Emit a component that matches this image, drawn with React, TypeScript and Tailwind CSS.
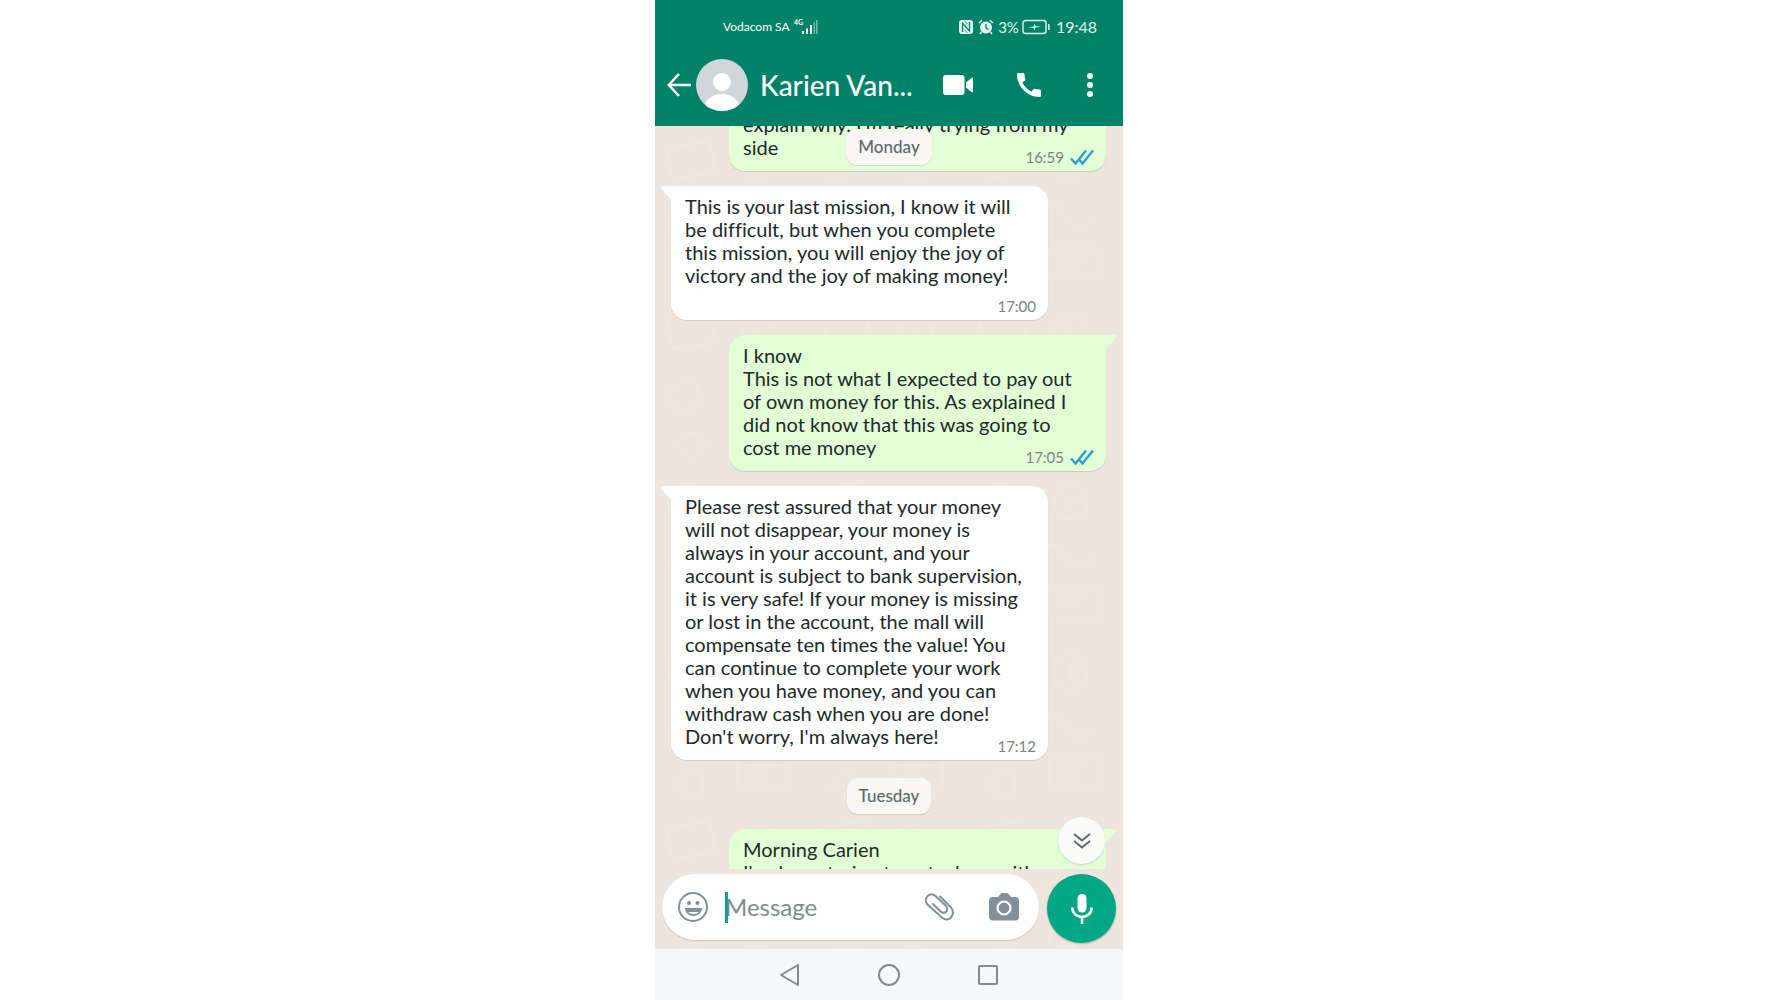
import type { ReactNode } from 'react'
import { MdCall } from 'react-icons/md'

type Message = {
  id: number
  mine?: boolean
  lines: string[]
  time?: string
  timeBelow?: boolean
  tail?: boolean
}

const monday: Message[] = [
  { id: 1, mine: true, lines: ["explain why. I'm really trying from my", 'side'], time: '16:59' },
  {
    id: 2,
    tail: true,
    timeBelow: true,
    time: '17:00',
    lines: [
      'This is your last mission, I know it will',
      'be difficult, but when you complete',
      'this mission, you will enjoy the joy of',
      'victory and the joy of making money!',
    ],
  },
  {
    id: 3,
    mine: true,
    tail: true,
    time: '17:05',
    lines: [
      'I know',
      'This is not what I expected to pay out',
      'of own money for this. As explained I',
      'did not know that this was going to',
      'cost me money',
    ],
  },
  {
    id: 4,
    tail: true,
    time: '17:12',
    lines: [
      'Please rest assured that your money',
      'will not disappear, your money is',
      'always in your account, and your',
      'account is subject to bank supervision,',
      'it is very safe! If your money is missing',
      'or lost in the account, the mall will',
      'compensate ten times the value! You',
      'can continue to complete your work',
      'when you have money, and you can',
      'withdraw cash when you are done!',
      "Don't worry, I'm always here!",
    ],
  },
]

const tuesday: Message[] = [
  { id: 5, mine: true, tail: true, lines: ['Morning Carien', "I've been trying to get a loan with"] },
]

function DoubleTick() {
  return (
    <svg viewBox="0 0 24 16" className="h-4 w-6" fill="none" stroke="#2a9fd0" strokeWidth="2.4" aria-hidden="true">
      <path d="M1 9.500l4.600 5L16 1.500" />
      <path d="M9.500 11l3 3.500L23 1.500" />
    </svg>
  )
}

function Bubble({ message }: { message: Message }) {
  const { mine, tail, lines, time, timeBelow } = message
  return (
    <div className={mine ? 'flex justify-end pr-[17px] pl-[74px]' : 'flex pl-4 pr-[75px]'}>
      <div
        className={`relative w-full rounded-[16px] px-[14px] pt-[9px] pb-3 shadow-[0_1px_1px_rgba(0,0,0,0.12)] ${
          mine ? 'bg-[#e2ffd6]' : 'bg-[#fefefe]'
        } ${tail ? (mine ? 'rounded-tr-none' : 'rounded-tl-none') : ''}`}
      >
        {tail && (
          <svg
            viewBox="0 0 12 16"
            className={`absolute top-0 h-4 w-3 ${mine ? '-right-[11px] -scale-x-100 text-[#e2ffd6]' : '-left-[11px] text-[#fefefe]'}`}
            aria-hidden="true"
          >
            <path d="M12 0H2.500C0.600 0 0 1.400 1.400 2.800L12 15z" fill="currentColor" />
          </svg>
        )}
        <p className="text-xl leading-[23px] whitespace-nowrap text-[#1d2a2a] [font-variant-ligatures:none]">
          {lines.map((line) => (
            <span key={line} className="block">
              {line}
            </span>
          ))}
        </p>
        {timeBelow && <div className="h-[21px]" />}
        {time && (
          <div className="absolute right-3 bottom-[5px] flex items-center gap-[6px] text-[15px] leading-[18px] text-[#7b8483]">
            <time>{time}</time>
            {mine && <DoubleTick />}
          </div>
        )}
      </div>
    </div>
  )
}

function DayChip({ children }: { children: ReactNode }) {
  return (
    <span className="rounded-[11px] bg-[#f8f7f4] px-3 py-2 text-[17px] leading-5 font-medium text-[#5f696c] shadow-[0_1px_1px_rgba(0,0,0,0.12)]">
      {children}
    </span>
  )
}

function StatusBar() {
  return (
    <div className="flex h-[54px] items-center justify-between pr-[26px] pl-[68px] text-white">
      <div className="flex items-center gap-1">
        <span className="text-xs">Vodacom SA</span>
        <svg viewBox="0 0 24 16" className="h-4 w-6" aria-hidden="true">
          <text x="0" y="6" fontSize="7" fontWeight="700" fill="currentColor">4G</text>
          <path d="M8 12h2v3H8zM12 9.500h2v5.500h-2zM16 6h2v9h-2z" fill="currentColor" />
          <path d="M19.500 3h1.500v12h-1.500zM22 1h1.500v14H22z" fill="currentColor" opacity="0.45" />
        </svg>
      </div>
      <div className="flex items-center text-[#e3f5ef]">
        <svg viewBox="0 0 14 14" className="size-[14px]" fill="none" aria-hidden="true">
          <rect width="14" height="14" rx="3" fill="currentColor" />
          <path d="M3.500 12V3.200L10.500 11V2" stroke="#008268" strokeWidth="1.300" />
          <path d="M5.500 1L9 4.500M5 9.500L8.500 13" stroke="#008268" strokeWidth="0.800" />
        </svg>
        <svg viewBox="0 0 16 16" className="ml-[5px] size-4" fill="none" stroke="currentColor" aria-hidden="true">
          <circle cx="8" cy="8.500" r="6" fill="currentColor" stroke="none" />
          <path d="M1 4l3-2.700M15 4l-3-2.700M3.500 13L2 15M12.500 13l1.500 2" strokeWidth="1.500" />
          <path d="M8 5v4l2.500 1.500" stroke="#008268" strokeWidth="1.300" />
        </svg>
        <span className="ml-1 text-[15px]">3%</span>
        <svg viewBox="0 0 28 16" className="ml-[3px] h-4 w-7" fill="none" stroke="currentColor" aria-hidden="true">
          <rect x="1" y="1.500" width="23" height="13" rx="2.500" strokeWidth="1.400" />
          <path d="M26.800 5v6" strokeWidth="1.500" />
          <path d="M6 8.200l6-.7V4.800l1.800 2.400 5.200.6-6 .9v2.700l-1.600-2.500z" fill="currentColor" stroke="none" />
        </svg>
        <span className="ml-[6px] text-base">19:48</span>
      </div>
    </div>
  )
}

function ChatHeader() {
  return (
    <div className="flex h-[72px] items-center pr-[29px] pb-[10px] pl-3 text-white">
      <button aria-label="Back" className="flex">
        <svg viewBox="0 0 24 24" className="size-6" fill="none" stroke="currentColor" strokeWidth="2.500" aria-hidden="true">
          <path d="M12 1L1.800 12 12 23M2 12h22" />
        </svg>
      </button>
      <svg viewBox="0 0 52 52" className="ml-[5px] size-[52px] shrink-0" aria-hidden="true">
        <clipPath id="avatar"><circle cx="26" cy="26" r="26" /></clipPath>
        <g clipPath="url(#avatar)">
          <rect width="52" height="52" fill="#cfd6dc" />
          <circle cx="26" cy="23" r="9" fill="#fff" />
          <ellipse cx="26" cy="48" rx="17" ry="13" fill="#fff" />
        </g>
      </svg>
      <h1 className="ml-3 min-w-0 flex-1 truncate text-[28px] leading-8 font-medium">Karien Van...</h1>
      <button aria-label="Video call" className="ml-4">
        <svg viewBox="0 0 30 20" className="h-5 w-[30px]" fill="currentColor" aria-hidden="true">
          <rect width="21.500" height="20" rx="3" />
          <path d="M23 7.500L28.500 3q1.500-1 1.500.5v13q0 1.500-1.500.5L23 12.500z" />
        </svg>
      </button>
      <button aria-label="Call" className="ml-10">
        <MdCall className="size-8" />
      </button>
      <button aria-label="More options" className="ml-[41px]">
        <svg viewBox="0 0 8 24" className="h-6 w-2" fill="currentColor" aria-hidden="true">
          <circle cx="4" cy="3" r="3" />
          <circle cx="4" cy="12" r="3" />
          <circle cx="4" cy="21" r="3" />
        </svg>
      </button>
    </div>
  )
}

function Wallpaper() {
  return (
    <svg className="absolute inset-0 size-full" aria-hidden="true">
      <defs>
        <pattern id="doodles" width="156" height="170" patternUnits="userSpaceOnUse">
          <g fill="none" stroke="#f5ede5" strokeWidth="2">
            <rect x="14" y="18" width="44" height="32" rx="5" transform="rotate(-8 36 34)" />
            <circle cx="104" cy="36" r="17" />
            <path d="M96 36h16M104 28v16M70 90q14-22 28 0t28 0M12 96l26-16 10 26-26 14z" />
            <rect x="82" y="122" width="50" height="30" rx="3" />
            <path d="M90 130h34M90 140h24M20 150q12-20 28-8 4 16-10 20z" />
          </g>
        </pattern>
      </defs>
      <rect width="100%" height="100%" fill="url(#doodles)" opacity="0.35" />
    </svg>
  )
}

function Composer() {
  return (
    <form className="relative flex items-start gap-2 px-[7px] pt-[5px] pb-[6px]">
      <div className="flex h-[66px] min-w-0 flex-1 items-center rounded-full bg-[#fefefe] pr-5 pl-4 shadow-[0_1px_1px_rgba(0,0,0,0.15)]">
        <button type="button" aria-label="Emoji">
          <svg viewBox="0 0 30 30" className="size-[30px]" fill="none" stroke="#82909a" strokeWidth="2" aria-hidden="true">
            <circle cx="15" cy="15" r="14" />
            <circle cx="11" cy="11" r="2" fill="#82909a" stroke="none" />
            <circle cx="19.500" cy="11" r="2" fill="#82909a" stroke="none" />
            <path d="M8 17h15c-1 8-14 8-15 0z" />
            <path d="M8 17h15l-1 3H9z" fill="#82909a" stroke="none" />
          </svg>
        </button>
        <span className="ml-[17px] h-[31px] w-[3px] bg-[#0aa581]" />
        <input
          aria-label="Message"
          placeholder="Message"
          className="-ml-[3px] min-w-0 flex-1 bg-transparent text-2xl text-[#1d2a2a] outline-none placeholder:text-[#808b90]"
        />
        <button type="button" aria-label="Attach">
          <svg viewBox="0 0 30 28" className="h-7 w-[30px]" fill="none" stroke="#82909a" strokeWidth="2" strokeLinecap="round" aria-hidden="true">
            <path d="M16 3.500L27 14.500C32 21 25.500 30 18.500 25L3.500 11.500C-1.500 5.500 6-2 11.500 3L22 13C25.500 17.500 20.500 22 16.500 18.500L9 11" />
          </svg>
        </button>
        <button type="button" aria-label="Camera" className="ml-[35px]">
          <svg viewBox="0 0 30 28" className="h-7 w-[30px]" aria-hidden="true">
            <path d="M4 4h5l2.500-3q.8-1 2-1h4q1.200 0 2 1L22 4h4q4 0 4 4v15.500q0 4-4 4H4q-4 0-4-4V8q0-4 4-4z" fill="#82909a" />
            <circle cx="15" cy="15" r="6.500" fill="none" stroke="#fff" strokeWidth="2.200" />
          </svg>
        </button>
      </div>
      <button
        type="button"
        aria-label="Record voice message"
        className="flex size-[69px] shrink-0 items-center justify-center rounded-full bg-[#02a884] shadow-[0_1px_2px_rgba(0,0,0,0.25)]"
      >
        <svg viewBox="0 0 22 30" className="h-[30px] w-[22px]" fill="none" stroke="#fff" strokeWidth="2.500" aria-hidden="true">
          <rect x="6.500" y="0" width="9" height="18.500" rx="4.500" fill="#fff" stroke="none" />
          <path d="M1.300 13.500c0 12.500 19.400 12.500 19.400 0M11 23v7" />
        </svg>
      </button>
    </form>
  )
}

function NavBar() {
  return (
    <nav className="flex h-[51px] items-center justify-center gap-[77px] bg-[#f7f8fa] text-[#85888c]">
      <button aria-label="Back">
        <svg viewBox="0 0 22 22" className="size-[22px]" fill="none" stroke="currentColor" strokeWidth="2" strokeLinejoin="round" aria-hidden="true">
          <path d="M19 1v20L2 11z" />
        </svg>
      </button>
      <button aria-label="Home">
        <svg viewBox="0 0 22 22" className="size-[22px]" fill="none" stroke="currentColor" strokeWidth="2" aria-hidden="true">
          <circle cx="11" cy="11" r="10" />
        </svg>
      </button>
      <button aria-label="Recent apps">
        <svg viewBox="0 0 22 22" className="size-[22px]" fill="none" stroke="currentColor" strokeWidth="2" aria-hidden="true">
          <rect x="2" y="2" width="18" height="18" rx="1" />
        </svg>
      </button>
    </nav>
  )
}

export default function App() {
  return (
    <div className="min-h-screen bg-white font-['Lato',sans-serif]">
      <main className="mx-auto flex h-screen w-full max-w-[468px] flex-col">
        <header className="bg-[#008268]">
          <StatusBar />
          <ChatHeader />
        </header>
        <div className="relative flex min-h-0 flex-1 flex-col bg-[#eee6de]">
          <Wallpaper />
          <section className="relative min-h-0 flex-1 overflow-hidden">
            <div className="-mt-[22px] flex flex-col gap-[15px]">
              {monday.map((message) => (
                <Bubble key={message.id} message={message} />
              ))}
              <div className="flex justify-center pt-[3px]">
                <DayChip>Tuesday</DayChip>
              </div>
              {tuesday.map((message) => (
                <Bubble key={message.id} message={message} />
              ))}
            </div>
            <div className="absolute inset-x-0 top-[3px] flex justify-center">
              <DayChip>Monday</DayChip>
            </div>
            <button
              aria-label="Scroll to latest"
              className="absolute right-[18px] bottom-[5px] flex size-[47px] items-center justify-center rounded-full bg-[#fafaf8] shadow-[0_1px_2px_rgba(0,0,0,0.15)]"
            >
              <svg viewBox="0 0 18 16" className="h-4 w-[18px]" fill="none" stroke="#5d6a70" strokeWidth="2" aria-hidden="true">
                <path d="M1 1l8 6.500L17 1M1 8l8 6.500L17 8" />
              </svg>
            </button>
          </section>
          <Composer />
        </div>
        <NavBar />
      </main>
    </div>
  )
}
